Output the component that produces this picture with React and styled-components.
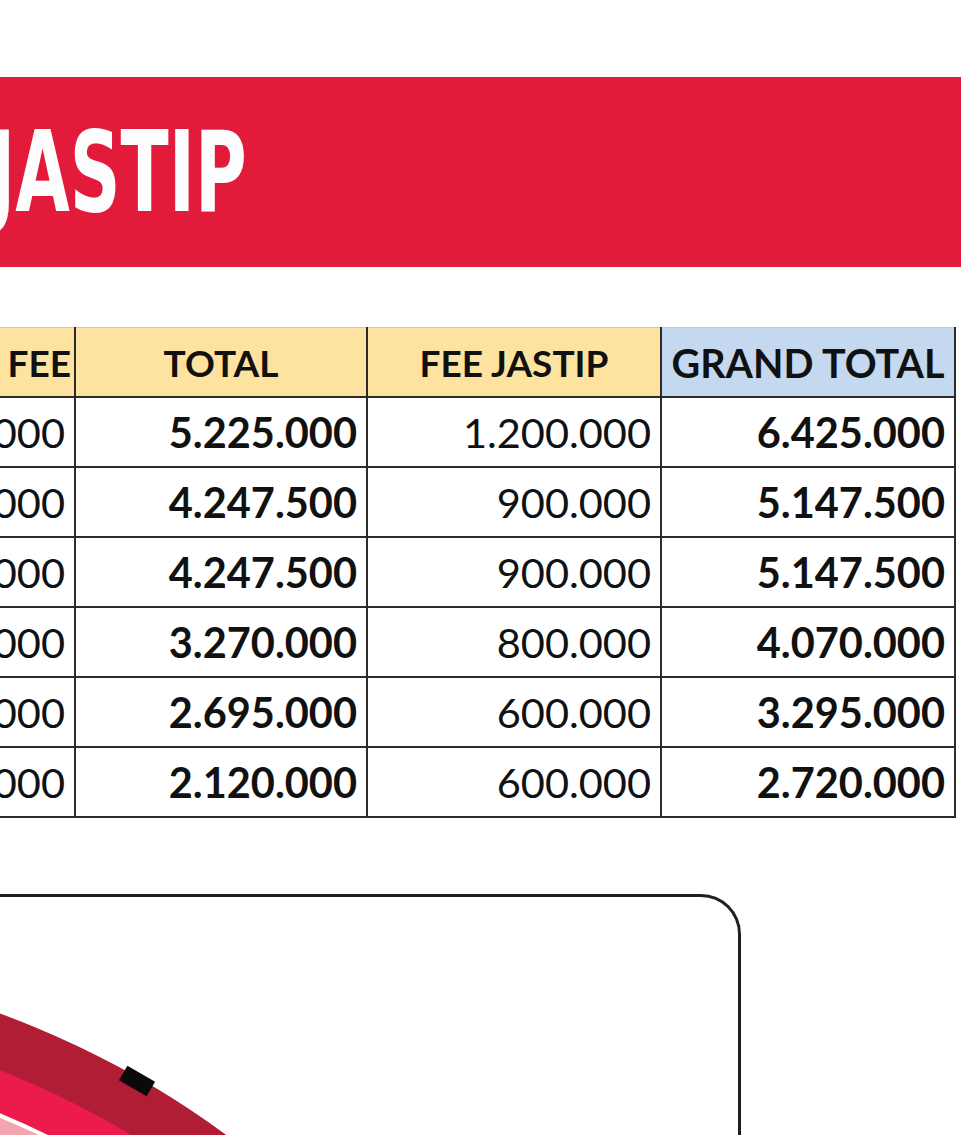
import React from "react";
import styled, { createGlobalStyle } from "styled-components";

const GlobalStyle = createGlobalStyle`
  html, body { margin: 0; padding: 0; background: #ffffff; }
  body { font-family: Lato, "Liberation Sans", sans-serif; overflow: hidden; }
`;

const Page = styled.div`
  width: 961px;
  height: 1135px;
  overflow: hidden;
  padding-top: 77px;
  box-sizing: border-box;
  background: #fff;
`;

const Banner = styled.header`
  height: 190px;
  background: #e31b3b;
  display: flex;
  align-items: center;
  overflow: hidden;
`;

const Title = styled.h1`
  margin: 0 0 0 -11px;
  font-family: "Liberation Sans Narrow", "DejaVu Sans Condensed", "Liberation Sans", sans-serif;
  font-stretch: condensed;
  font-weight: 700;
  font-size: 112px;
  line-height: 1;
  color: #fdfdfd;
  transform: scaleX(0.7);
  transform-origin: left center;
  white-space: nowrap;
`;

const TableArea = styled.section`
  margin-top: 60px;
  display: flex;
  justify-content: flex-end;
  padding-right: 5px;
  overflow: hidden;
`;

const Table = styled.table`
  flex-shrink: 0;
  border-collapse: collapse;
  table-layout: fixed;
  color: #111;
`;

const Th = styled.th`
  height: 68px;
  padding: 0 ${(p) => (p.$align === "right" ? "3px" : "2px")};
  background: ${(p) => p.$bg};
  font-family: Lato, "Liberation Sans", sans-serif;
  font-weight: 700;
  font-size: ${(p) => p.$size || 37}px;
  text-align: ${(p) => p.$align || "center"};
  white-space: nowrap;
  border: 2px solid #2b2b2b;
  border-top: 1px solid #c8c8c8;
`;

const Td = styled.td`
  height: 68px;
  padding: 0 9px;
  font-family: Lato, "Liberation Sans", sans-serif;
  font-size: 41.5px;
  font-weight: ${(p) => (p.$bold ? 700 : 400)};
  text-align: right;
  white-space: nowrap;
  border: 2px solid #2b2b2b;
`;

const Card = styled.section`
  margin-top: 76px;
  width: 741px;
  height: 270px;
  box-sizing: border-box;
  border-top: 3px solid #1f1f1f;
  border-right: 3px solid #1f1f1f;
  border-top-right-radius: 40px;
  overflow: hidden;
`;

const Wheel = styled.svg`
  display: block;
`;

const rows = [
  ["250.000", "5.225.000", "1.200.000", "6.425.000"],
  ["250.000", "4.247.500", "900.000", "5.147.500"],
  ["250.000", "4.247.500", "900.000", "5.147.500"],
  ["250.000", "3.270.000", "800.000", "4.070.000"],
  ["250.000", "2.695.000", "600.000", "3.295.000"],
  ["250.000", "2.120.000", "600.000", "2.720.000"],
];

export default function App() {
  return (
    <Page>
      <GlobalStyle />
      <Banner>
        <Title>JASTIP</Title>
      </Banner>
      <TableArea>
        <Table>
          <colgroup>
            <col style={{ width: 200 }} />
            <col style={{ width: 292 }} />
            <col style={{ width: 294 }} />
            <col style={{ width: 294 }} />
          </colgroup>
          <thead>
            <tr>
              <Th $bg="#fde39f" $align="right">ONGKIR FEE</Th>
              <Th $bg="#fde39f">TOTAL</Th>
              <Th $bg="#fde39f">FEE JASTIP</Th>
              <Th $bg="#c4d8ef" $size={39.5}>GRAND TOTAL</Th>
            </tr>
          </thead>
          <tbody>
            {rows.map((r, i) => (
              <tr key={i}>
                <Td>{r[0]}</Td>
                <Td $bold>{r[1]}</Td>
                <Td>{r[2]}</Td>
                <Td $bold>{r[3]}</Td>
              </tr>
            ))}
          </tbody>
        </Table>
      </TableArea>
      <Card>
        <Wheel width="738" height="267" viewBox="0 0 738 267">
          <g transform="translate(0,-897)">
            <circle cx="-309" cy="1861" r="902" fill="#b21d36" />
            <circle cx="-309" cy="1861" r="849" fill="#ed1b4b" />
            <circle cx="-309" cy="1861" r="809" fill="#ffffff" />
            <circle cx="-309" cy="1861" r="805" fill="#f2a5ae" />
            <rect x="-16" y="-8.5" width="32" height="17" fill="#0a0a0a" transform="translate(137 1081) rotate(30)" />
          </g>
        </Wheel>
      </Card>
    </Page>
  );
}
